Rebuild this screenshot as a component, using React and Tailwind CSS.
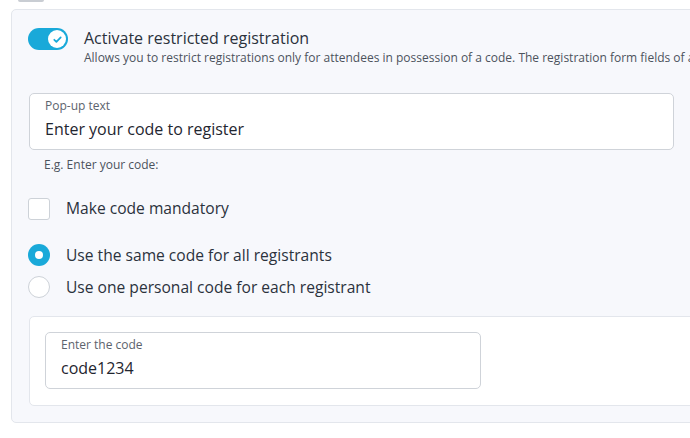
import { useState } from 'react';

const Toggle = ({ on }) => (
  <div className={`w-10 h-[22px] rounded-full flex items-center px-[2px] shrink-0 ${on ? 'bg-[#19a9d9] justify-end' : 'bg-[#cfd4da] justify-start'}`}>
    <div className="w-[18px] h-[18px] rounded-full bg-white flex items-center justify-center">
      {on && (
        <svg width="11" height="11" viewBox="0 0 12 12" fill="none">
          <path d="M2.5 6.3l2.3 2.3 4.7-5" stroke="#19a9d9" strokeWidth="1.9" strokeLinecap="round" strokeLinejoin="round" />
        </svg>
      )}
    </div>
  </div>
);

const Radio = ({ checked, label, onClick }) => (
  <div className="flex items-center gap-4 cursor-pointer h-[22px]" onClick={onClick}>
    {checked ? (
      <div className="w-[22px] h-[22px] rounded-full bg-[#19a9d9] flex items-center justify-center shrink-0">
        <div className="w-2 h-2 rounded-full bg-white" />
      </div>
    ) : (
      <div className="w-[22px] h-[22px] rounded-full bg-white border border-[#cdd2d8] shrink-0" />
    )}
    <span className="text-[15.6px] leading-6 text-[#2b323c]">{label}</span>
  </div>
);

const Field = ({ label, value, className }) => (
  <div className={`bg-white border border-[#cfd3d9] rounded-[5px] pl-[15px] pt-1 pb-2 ${className}`}>
    <div className="text-xs leading-4 text-[#5c636d]">{label}</div>
    <div className="text-base leading-6 text-[#1f2630] mt-[3px]">{value}</div>
  </div>
);

const App = () => {
  const [mandatory, setMandatory] = useState(false);
  const [mode, setMode] = useState('same');

  return (
    <div className="w-[690px] h-[438px] overflow-hidden bg-white" style={{ fontFamily: '"Open Sans", "Noto Sans", sans-serif' }}>
      <div className="ml-[18px] w-[26px] h-[2px] rounded-b bg-[#c9cdd3]" />
      <div className="ml-[11px] mt-[7px] w-[720px] h-[414px] bg-[#f7f8fc] border border-[#e3e6ec] rounded-[5px] pl-4 pt-[18px]">
        <div className="flex items-start gap-4">
          <Toggle on />
          <div>
            <div className="text-base leading-5 text-[#2b323c]">Activate restricted registration</div>
            <div className="text-xs leading-4 mt-[2px] text-[#4c535d] whitespace-nowrap">
              Allows you to restrict registrations only for attendees in possession of a code. The registration form fields of all registrants will be shown.
            </div>
          </div>
        </div>

        <Field label="Pop-up text" value="Enter your code to register" className="mt-[27px] ml-px w-[645px] h-[57px]" />
        <div className="text-xs leading-4 text-[#4c535d] ml-4 mt-[7px]">E.g. Enter your code:</div>

        <div className="flex items-center gap-4 mt-[25px] cursor-pointer h-[22px]" onClick={() => setMandatory(!mandatory)}>
          <div className="w-[22px] h-[22px] rounded-[3px] bg-white border border-[#cdd2d8] shrink-0" />
          <span className="text-[15.6px] leading-6 text-[#2b323c] -mt-[2px]">Make code mandatory</span>
        </div>

        <div className="mt-[24px] flex flex-col gap-[10px]">
          <Radio checked={mode === 'same'} label="Use the same code for all registrants" onClick={() => setMode('same')} />
          <Radio checked={mode === 'personal'} label="Use one personal code for each registrant" onClick={() => setMode('personal')} />
        </div>

        <div className="mt-[18px] ml-px bg-white border border-[#e3e6ec] rounded-[5px] h-[90px] pl-[15px] pt-[15px]">
          <Field label="Enter the code" value="code1234" className="w-[436px] h-[57px]" />
        </div>
      </div>
    </div>
  );
};

export default App;
